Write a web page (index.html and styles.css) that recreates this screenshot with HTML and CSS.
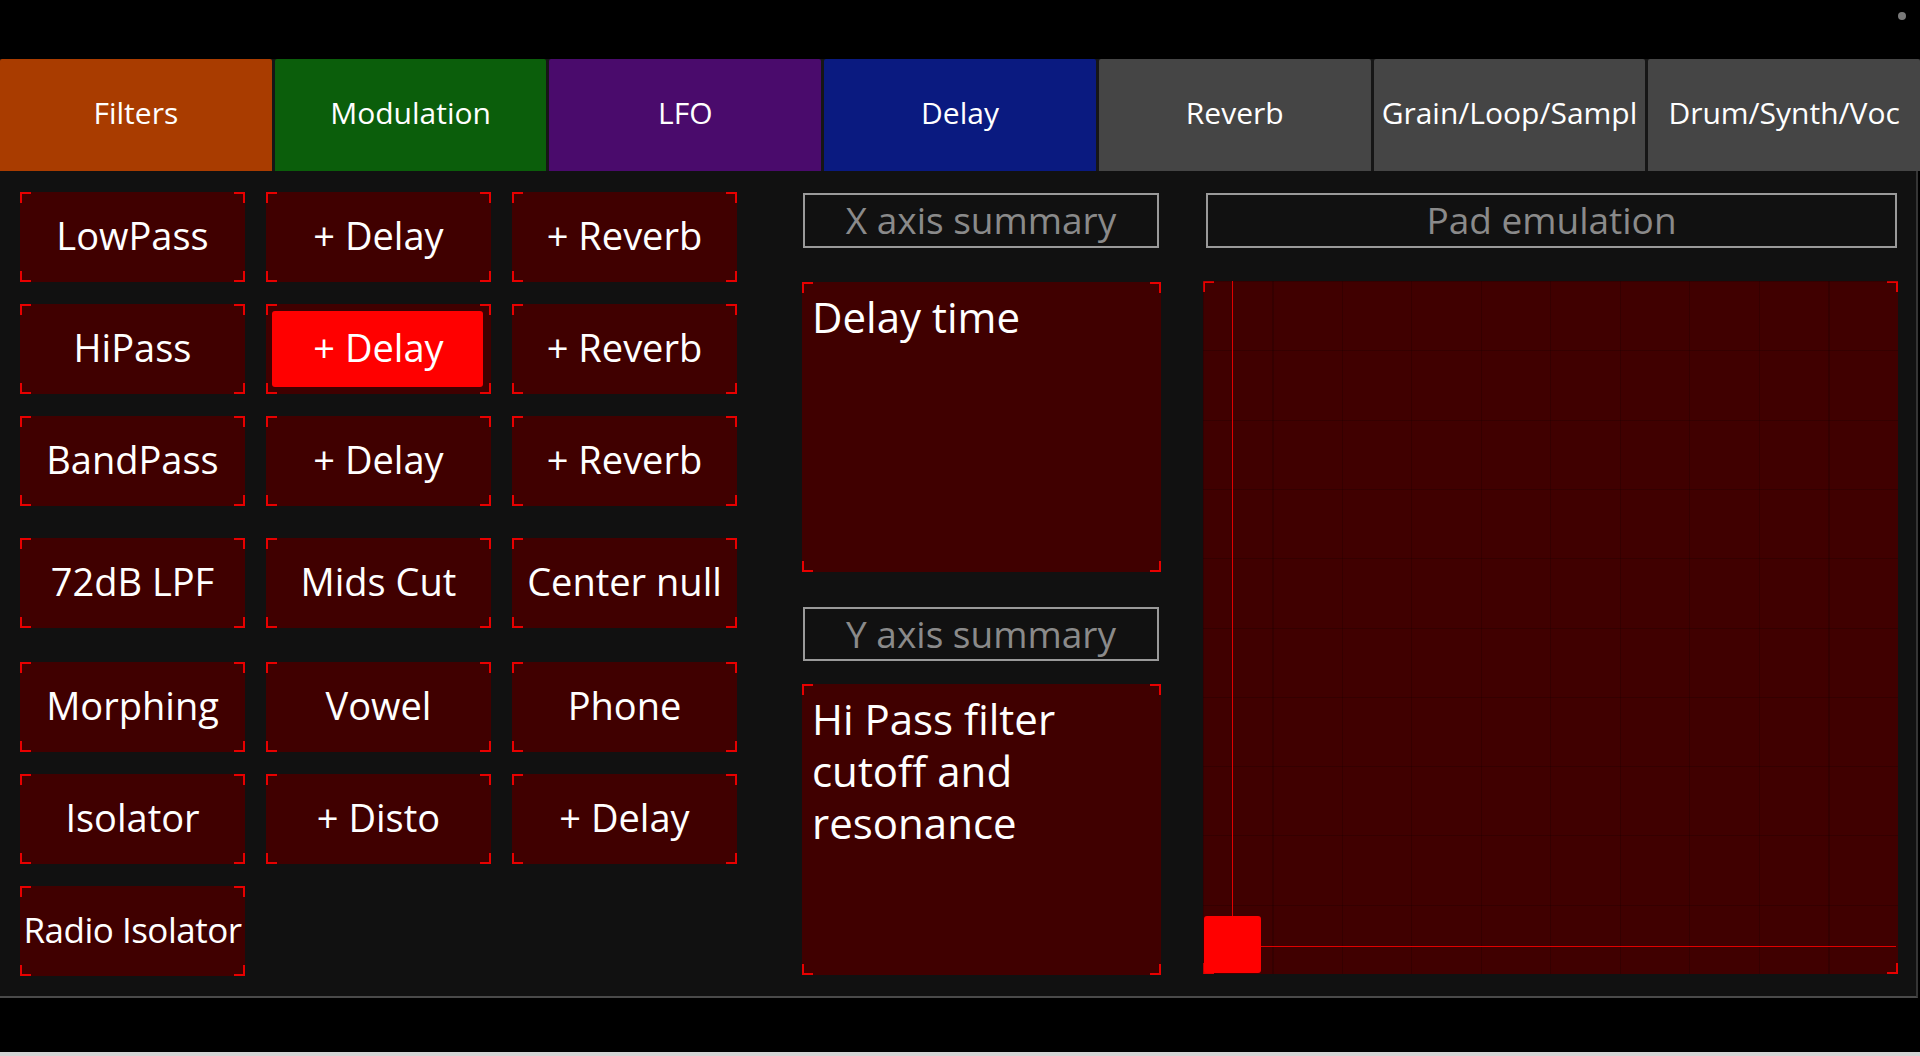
FILE: index.html
```html
<!DOCTYPE html>
<html lang="en">
<head>
    <meta charset="UTF-8">
    <meta name="viewport" content="width=device-width, initial-scale=1.0">
    <title>Pad Control</title>
    <link rel="stylesheet" href="styles.css">
</head>
<body>
    <div class="topbar">
        <span class="dot"></span>
    </div>

    <div class="tabs">
        <div class="tab filters">Filters</div>
        <div class="tab modulation">Modulation</div>
        <div class="tab lfo">LFO</div>
        <div class="tab delay">Delay</div>
        <div class="tab">Reverb</div>
        <div class="tab">Grain/Loop/Sampl</div>
        <div class="tab">Drum/Synth/Voc</div>
    </div>

    <div class="main">
        <div class="buttons">
            <div class="row">
                <div class="btn frame">LowPass</div>
                <div class="btn frame">+ Delay</div>
                <div class="btn frame">+ Reverb</div>
            </div>
            <div class="row">
                <div class="btn frame">HiPass</div>
                <div class="btn frame on"><span>+ Delay</span></div>
                <div class="btn frame">+ Reverb</div>
            </div>
            <div class="row">
                <div class="btn frame">BandPass</div>
                <div class="btn frame">+ Delay</div>
                <div class="btn frame">+ Reverb</div>
            </div>
            <div class="row row-4">
                <div class="btn frame">72dB LPF</div>
                <div class="btn frame">Mids Cut</div>
                <div class="btn frame">Center null</div>
            </div>
            <div class="row row-5">
                <div class="btn frame">Morphing</div>
                <div class="btn frame">Vowel</div>
                <div class="btn frame">Phone</div>
            </div>
            <div class="row">
                <div class="btn frame">Isolator</div>
                <div class="btn frame">+ Disto</div>
                <div class="btn frame">+ Delay</div>
            </div>
            <div class="row">
                <div class="btn frame tight">Radio Isolator</div>
            </div>
        </div>

        <div class="summary-col">
            <div class="summary">X axis summary</div>
            <div class="desc frame desc-x">Delay time</div>
            <div class="summary summary-y">Y axis summary</div>
            <div class="desc frame desc-y">Hi Pass filter cutoff and resonance</div>
        </div>

        <div class="pad-col">
            <div class="summary pad-title">Pad emulation</div>
            <div class="pad frame">
                <div class="grid"></div>
                <div class="line-v"></div>
                <div class="line-h"></div>
                <div class="handle"></div>
            </div>
        </div>
    </div>

    <div class="footer"></div>
</body>
</html>
```

FILE: styles.css
```css
:root {
    --red: #e80000;
}

* {
    box-sizing: border-box;
}

body {
    margin: 0;
    background: #000;
    font-family: "Open Sans", "Noto Sans", sans-serif;
    color: #fff;
    width: 1920px;
    height: 1056px;
    overflow: hidden;
}

.topbar {
    height: 59px;
    display: flex;
    justify-content: flex-end;
    padding: 12px 14px 0 0;
}

.dot {
    width: 8px;
    height: 8px;
    border-radius: 50%;
    background: #7a7a7a;
}

/* tab strip */
.tabs {
    height: 112px;
    display: flex;
    gap: 3px;
    background: #161616;
}

.tab {
    flex: 1;
    display: flex;
    align-items: center;
    justify-content: center;
    padding-bottom: 5px;
    background: #454545;
    font-size: 30px;
    white-space: nowrap;
    overflow: hidden;
    border-radius: 2px 2px 0 0;
}

.tab.filters { background: #a93c00; }
.tab.modulation { background: #0b5e0b; }
.tab.lfo { background: #4a0b6c; }
.tab.delay { background: #0a1a80; }

/* main panel */
.main {
    height: 827px;
    margin-right: 2px;
    background: #111;
    border-right: 2px solid #353535;
    border-bottom: 2px solid #4a4a4a;
    padding: 21px 0 0 20px;
    display: flex;
}

/* red corner brackets */
.frame {
    background:
        linear-gradient(var(--red), var(--red)) left top / 11px 2px,
        linear-gradient(var(--red), var(--red)) left top / 2px 11px,
        linear-gradient(var(--red), var(--red)) right top / 11px 2px,
        linear-gradient(var(--red), var(--red)) right top / 2px 11px,
        linear-gradient(var(--red), var(--red)) left bottom / 11px 2px,
        linear-gradient(var(--red), var(--red)) left bottom / 2px 11px,
        linear-gradient(var(--red), var(--red)) right bottom / 11px 2px,
        linear-gradient(var(--red), var(--red)) right bottom / 2px 11px,
        #400000;
    background-repeat: no-repeat;
}

.buttons {
    width: 717px;
    display: flex;
    flex-direction: column;
    gap: 22px;
}

.row {
    display: grid;
    grid-template-columns: repeat(3, 225px);
    column-gap: 21px;
}

.row-4 { margin-top: 10px; }
.row-5 { margin-top: 12px; }

.btn {
    position: relative;
    height: 90px;
    display: flex;
    align-items: center;
    justify-content: center;
    padding-bottom: 4px;
    font-size: 38px;
    white-space: nowrap;
}

.btn.tight {
    font-size: 35px;
    letter-spacing: -0.5px;
}

.btn.on::before {
    content: "";
    position: absolute;
    inset: 7px 8px 7px 6px;
    background: #ff0000;
    border-radius: 3px;
}

.btn.on span {
    position: relative;
}

/* axis summaries */
.summary-col {
    width: 359px;
    margin-left: 65px;
    display: flex;
    flex-direction: column;
}

.summary {
    height: 55px;
    margin: 1px 2px 0 1px;
    padding-bottom: 2px;
    border: 2px solid #9a9a9a;
    color: #8a8a8a;
    font-size: 37px;
    display: flex;
    align-items: center;
    justify-content: center;
}

.summary-y {
    height: 54px;
    margin-top: 35px;
}

.desc {
    padding: 9px 10px;
    font-size: 42px;
    line-height: 52px;
}

.desc-x {
    height: 290px;
    margin-top: 34px;
}

.desc-y {
    height: 291px;
    margin-top: 23px;
}

/* xy pad */
.pad-col {
    width: 695px;
    margin-left: 42px;
    display: flex;
    flex-direction: column;
}

.pad-title {
    margin: 1px 1px 0 3px;
}

.pad {
    position: relative;
    height: 693px;
    margin-top: 33px;
}

.grid {
    position: absolute;
    inset: 0;
    background:
        repeating-linear-gradient(to right, rgba(0, 0, 0, 0.18) 0 1px, transparent 1px 10%),
        repeating-linear-gradient(to bottom, rgba(0, 0, 0, 0.18) 0 1px, transparent 1px 10%);
}

.line-v {
    position: absolute;
    left: 29px;
    top: 0;
    bottom: 28px;
    width: 1px;
    background: #e00000;
}

.line-h {
    position: absolute;
    left: 29px;
    right: 2px;
    bottom: 27px;
    height: 1px;
    background: #e00000;
}

.handle {
    position: absolute;
    left: 1px;
    bottom: 1px;
    width: 57px;
    height: 57px;
    background: #ff0000;
    border-radius: 3px;
}

.footer {
    height: 58px;
    border-bottom: 4px solid #d4d4d4;
}
```
